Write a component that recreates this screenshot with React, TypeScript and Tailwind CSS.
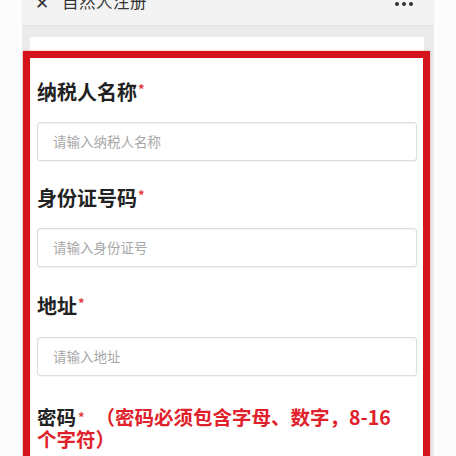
import React from "react";

const font = { fontFamily: '"Noto Sans CJK SC", "Noto Sans", sans-serif' };

function Label({ text }: { text: string }) {
  return (
    <div className="h-[28px] leading-[28px] text-[20px] font-bold text-[#222] whitespace-nowrap">
      {text}
      <span className="text-[13px] text-[#e23a3a] align-top leading-[22px] ml-[1px]">*</span>
    </div>
  );
}

function Field({ placeholder, className }: { placeholder: string; className?: string }) {
  return (
    <div
      className={
        "h-[39px] rounded-[3px] border border-[#dddddd] bg-white shadow-[inset_0_1px_2px_rgba(0,0,0,0.06),0_1px_1px_rgba(0,0,0,0.05)] flex items-center pl-[15px] text-[13.5px] text-[#a8a8a8] " +
        (className ?? "")
      }
    >
      {placeholder}
    </div>
  );
}

export default function App() {
  return (
    <div className="relative w-[456px] h-[456px] overflow-hidden bg-[#fcfcfc]" style={font}>
      <div className="ml-[22px] w-[412px] h-full bg-[#ebebeb] flex flex-col">
        <div className="h-[25px] bg-[#f3f3f3] overflow-hidden shrink-0 shadow-[0_1px_2px_rgba(0,0,0,0.05)]">
          <div className="-mt-[10px] h-[22px] flex items-center pl-[13px] pr-[21px] text-[#333]">
            <span className="text-[17px] leading-none w-[14px]">✕</span>
            <span className="ml-[13px] text-[16.5px] tracking-[0.5px]">自然人注册</span>
            <span className="ml-auto flex items-center gap-[3px] mt-[6px]">
              <span className="w-[4px] h-[4px] rounded-full bg-[#333]" />
              <span className="w-[4px] h-[4px] rounded-full bg-[#333]" />
              <span className="w-[4px] h-[4px] rounded-full bg-[#333]" />
            </span>
          </div>
        </div>
        <div className="flex-1 pt-[12px] pl-[8px] pr-[10px]">
          <div className="h-full bg-white rounded-[2px] pt-[41px] pl-[7px] pr-[7px]">
            <Label text="纳税人名称" />
            <Field placeholder="请输入纳税人名称" className="mt-[16px]" />
            <div className="mt-[23px]">
              <Label text="身份证号码" />
            </div>
            <Field placeholder="请输入身份证号" className="mt-[16px]" />
            <div className="mt-[25px]">
              <Label text="地址" />
            </div>
            <Field placeholder="请输入地址" className="mt-[17px]" />
            <div className="mt-[30px] text-[19.5px] leading-[22px] font-bold whitespace-nowrap">
              <span className="text-[#222]">密码</span>
              <span className="ml-[2px] text-[13px] text-[#e23a3a] align-top">*</span>
              <span className="ml-[11px] text-[#e0202a]">（密码必须包含字母、数字，8-16</span>
              <br />
              <span className="text-[#e0202a]">个字符）</span>
            </div>
          </div>
        </div>
      </div>
      <div className="absolute left-[23px] top-[51px] w-[407px] h-[430px] border-[7px] border-[#d3141b] shadow-[0_0_2px_rgba(211,20,27,0.4)]" />
    </div>
  );
}
